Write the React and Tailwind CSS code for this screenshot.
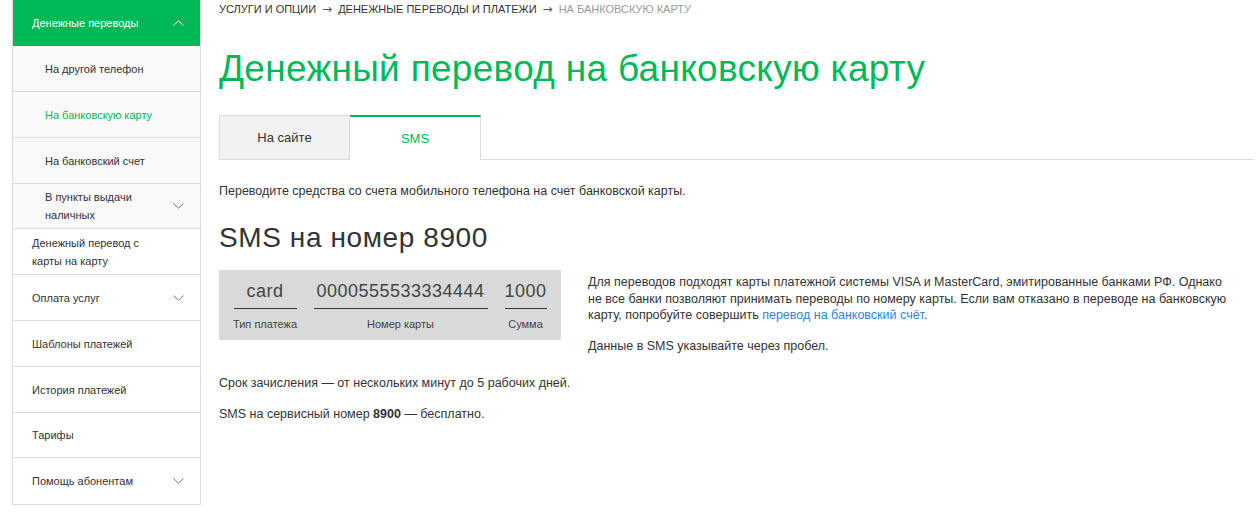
const Chevron = ({ up, className = "" }) => (
  <svg width="11" height="6" viewBox="0 0 11 6" fill="none" className={className}>
    <path
      d={up ? "M0.5 5.5 L5.5 0.8 L10.5 5.5" : "M0.5 0.5 L5.5 5.2 L10.5 0.5"}
      stroke="currentColor"
      strokeWidth="1"
    />
  </svg>
);

const subItems = [
  { label: "На другой телефон" },
  { label: "На банковскую карту", active: true },
  { label: "На банковский счет" },
  { label: "В пункты выдачи наличных", arrow: true, two: true, h: "h-[45px]" },
];

const menuItems = [
  { label: "Денежный перевод с карты на карту", two: true },
  { label: "Оплата услуг", arrow: true },
  { label: "Шаблоны платежей" },
  { label: "История платежей" },
  { label: "Тарифы", h: "h-[45px]" },
  { label: "Помощь абонентам", arrow: true },
];

const smsFields = [
  { value: "card", label: "Тип платежа", w: "w-[63px]" },
  { value: "0000555533334444", label: "Номер карты", w: "w-[174px]" },
  { value: "1000", label: "Сумма", w: "w-[42px]" },
];

const Sidebar = () => (
  <aside className="w-[189px] shrink-0 self-start ml-[12px] border-x border-b border-[#dcdcdc] text-[11px] text-[#333]">
    <div className="h-[46px] bg-[#00b956] text-white flex items-center justify-between pl-[19px] pr-[16px]">
      <span>Денежные переводы</span>
      <Chevron up />
    </div>
    {subItems.map(({ label, active, arrow, two, h }) => (
      <div
        key={label}
        className={`${h || "h-[46px]"} bg-[#f9f9f9] border-b border-[#dcdcdc] flex items-center justify-between pl-[32px] pr-[16px]`}
      >
        <span
          className={`leading-[18px] ${two ? "w-[95px]" : ""} ${
            active ? "text-[#00b956]" : ""
          }`}
        >
          {label}
        </span>
        {arrow && <Chevron className="text-[#777]" />}
      </div>
    ))}
    {menuItems.map(({ label, arrow, two, h }, i) => (
      <div
        key={label}
        className={`${h || "h-[46px]"} flex items-center justify-between pl-[19px] pr-[16px] ${
          i < menuItems.length - 1 ? "border-b border-[#dcdcdc]" : ""
        }`}
      >
        <span className={`leading-[18px] ${two ? "w-[115px]" : ""}`}>{label}</span>
        {arrow && <Chevron className="text-[#777]" />}
      </div>
    ))}
  </aside>
);

const Arrow = () => (
  <span className="font-['DejaVu_Sans',sans-serif] text-[12px] text-[#555] mx-[6px]">→</span>
);

export default function App() {
  return (
    <div className="w-[1257px] h-[518px] bg-white flex items-start font-['Liberation_Sans',Arial,sans-serif] text-[#333] overflow-hidden">
      <Sidebar />
      <main className="flex-1 ml-[18px] mr-[4px]">
        <div className="text-[11px] uppercase leading-[16px] mt-[1px] text-[#333]">
          Услуги и опции<Arrow />Денежные переводы и платежи<Arrow />
          <span className="text-[#999]">На банковскую карту</span>
        </div>
        <h1 className="text-[37px] leading-[44px] text-[#00b956] mt-[30px] tracking-[0.3px]">
          Денежный перевод на банковскую карту
        </h1>
        <div className="flex mt-[24px] border-b border-[#dcdcdc] h-[45px]">
          <div className="w-[131px] h-[45px] bg-[#f2f2f2] border border-[#dcdcdc] flex items-center justify-center text-[13px]">
            На сайте
          </div>
          <div className="w-[131px] h-[45px] bg-white border-t-2 border-t-[#00b956] border-r border-r-[#dcdcdc] flex items-center justify-center text-[13px] text-[#00b956] -mb-px">
            SMS
          </div>
        </div>
        <p className="text-[12.5px] mt-[23px] leading-[16px]">
          Переводите средства со счета мобильного телефона на счет банковской карты.
        </p>
        <h2 className="text-[28px] leading-[32px] mt-[23px] text-[#333] tracking-[0.6px]">
          SMS на номер 8900
        </h2>
        <div className="flex mt-[16px]">
          <div className="w-[342px] h-[70px] bg-[#d9d9d9] flex justify-center gap-[17px] pt-[10px] shrink-0">
            {smsFields.map(({ value, label, w }) => (
              <div key={label} className={`${w} flex flex-col items-center`}>
                <span className="text-[18px] leading-[22px] text-[#444] tracking-[0.5px] whitespace-nowrap">
                  {value}
                </span>
                <span className="block w-full h-px bg-[#333] mt-[6px]" />
                <span className="text-[11px] leading-[14px] mt-[8px] text-[#444] whitespace-nowrap">
                  {label}
                </span>
              </div>
            ))}
          </div>
          <div className="ml-[27px] mt-[4px] text-[12.5px] leading-[16.5px] w-[650px]">
            <p>
              Для переводов подходят карты платежной системы VISA и MasterCard, эмитированные
              банками РФ. Однако не все банки позволяют принимать переводы по номеру карты. Если
              вам отказано в переводе на банковскую карту, попробуйте совершить{" "}
              <span className="text-[#1e88e5]">перевод на банковский счёт</span>.
            </p>
            <p className="mt-[14px]">Данные в SMS указывайте через пробел.</p>
          </div>
        </div>
        <p className="text-[12.5px] leading-[16px] mt-[21px]">
          Срок зачисления — от нескольких минут до 5 рабочих дней.
        </p>
        <p className="text-[12.5px] leading-[16px] mt-[15px]">
          SMS на сервисный номер <b>8900</b> — бесплатно.
        </p>
      </main>
    </div>
  );
}
